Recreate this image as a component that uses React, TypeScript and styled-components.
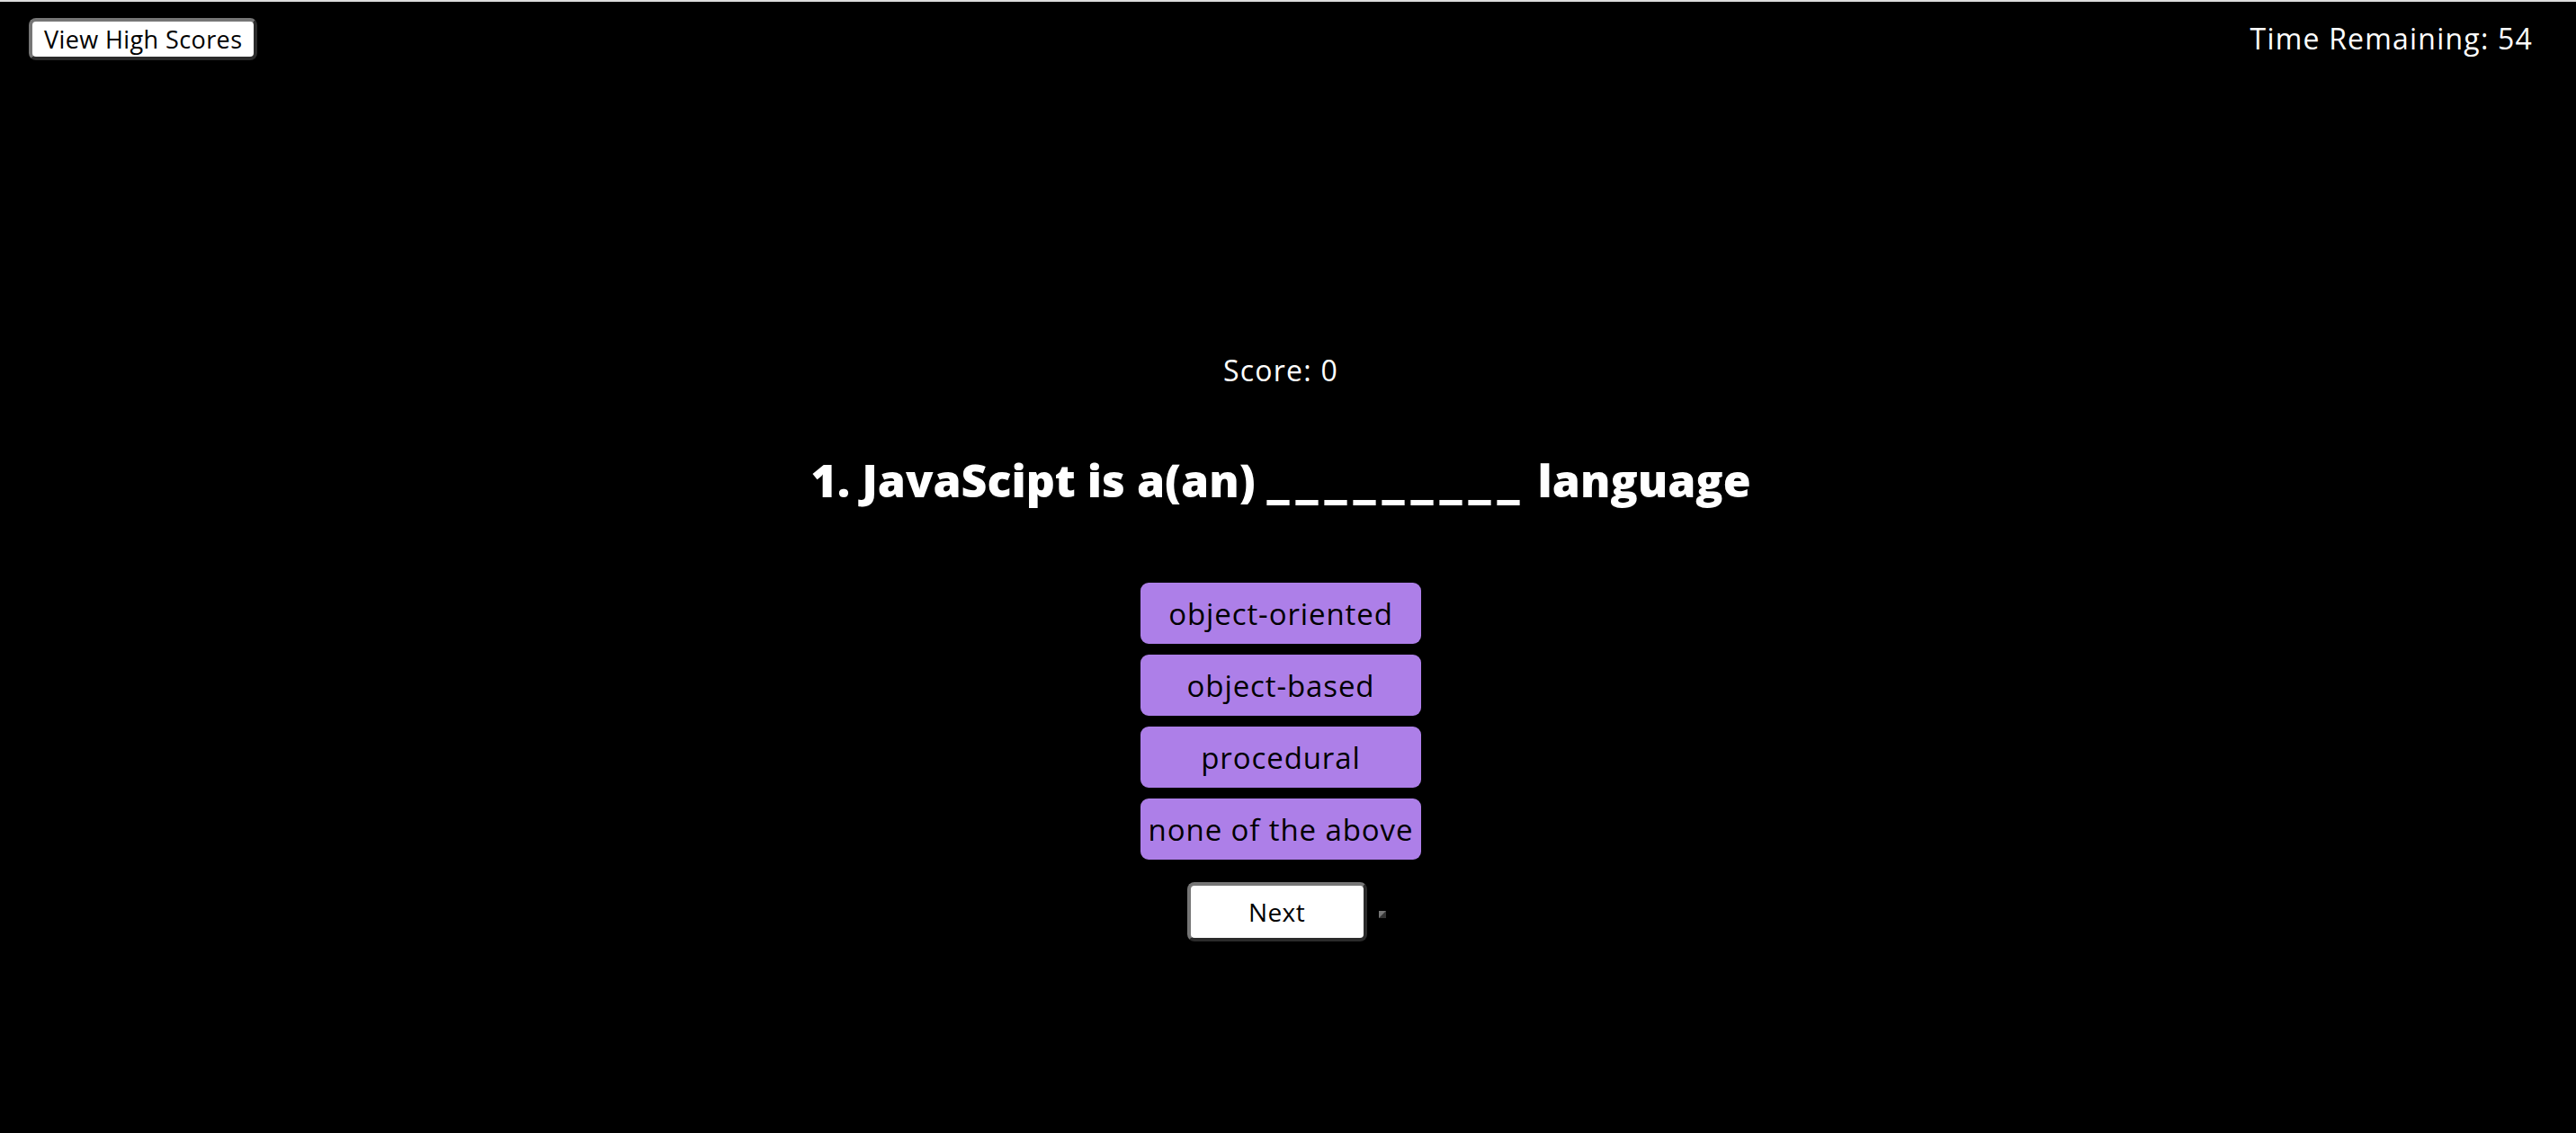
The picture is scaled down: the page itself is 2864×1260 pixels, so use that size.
import React from "react";
import styled, { createGlobalStyle } from "styled-components";

const GlobalStyle = createGlobalStyle`
    html {
        background: #000;
    }
    body {
        margin: 0;
        min-height: 1260px;
        background: #000;
        border-top: 2px solid #dcdcdc;
        font-family: "Open Sans", "Liberation Sans", sans-serif;
        color: #fff;
    }
`;

const Header = styled.header`
    display: flex;
    justify-content: space-between;
    align-items: flex-start;
    padding: 18px 48px 0 32px;
`;

const HighScoresButton = styled.button`
    height: 47px;
    padding: 0 13px;
    font-family: inherit;
    font-size: 27px;
    letter-spacing: 0.4px;
    color: #000;
    background: #fff;
    border: 4px solid;
    border-color: #767676 #2b2b2b #2b2b2b #767676;
    border-radius: 8px;
    cursor: pointer;
`;

const Timer = styled.div`
    font-size: 32px;
    letter-spacing: 1.2px;
    line-height: 46px;
`;

const Quiz = styled.main`
    display: flex;
    flex-direction: column;
    align-items: center;
    padding: 322px 16px 0 0;
`;

const Score = styled.p`
    margin: 0;
    font-size: 32px;
    letter-spacing: 1.2px;
    line-height: 46px;
`;

const Question = styled.h2`
    margin: 64px 0 0;
    font-size: 50px;
    font-weight: 800;
    line-height: 70px;
`;

const Blank = styled.span`
    letter-spacing: 7px;
`;

const Choices = styled.div`
    display: grid;
    grid-template-columns: 312px;
    gap: 12px;
    margin-top: 79px;
`;

const Choice = styled.button`
    height: 68px;
    padding: 0;
    font-family: inherit;
    font-size: 33px;
    letter-spacing: 0.9px;
    color: #000;
    background: #ad7fe8;
    border: none;
    border-radius: 9px;
    cursor: pointer;
`;

const Footer = styled.div`
    display: flex;
    align-items: center;
    margin-top: 25px;
    margin-left: 12px;
`;

const NextButton = styled.button`
    width: 200px;
    height: 66px;
    font-family: inherit;
    font-size: 28px;
    letter-spacing: 0.4px;
    color: #000;
    background: #fff;
    border: 4px solid;
    border-color: #767676 #2b2b2b #2b2b2b #767676;
    border-radius: 8px;
    cursor: pointer;
`;

const Feedback = styled.span`
    display: inline-block;
    width: 0;
    height: 0;
    margin-left: 13px;
    margin-top: 6px;
    border: 4px solid;
    border-color: #767676 #333 #333 #767676;
`;

const choices = ["object-oriented", "object-based", "procedural", "none of the above"];

export default function App() {
    return (
        <>
            <GlobalStyle />
            <Header>
                <HighScoresButton>View High Scores</HighScoresButton>
                <Timer>Time Remaining: 54</Timer>
            </Header>
            <Quiz>
                <Score>Score: 0</Score>
                <Question>
                    1. JavaScipt is a(an) <Blank>_________</Blank> language
                </Question>
                <Choices>
                    {choices.map((c) => (
                        <Choice key={c}>{c}</Choice>
                    ))}
                </Choices>
                <Footer>
                    <NextButton>Next</NextButton>
                    <Feedback />
                </Footer>
            </Quiz>
        </>
    );
}
